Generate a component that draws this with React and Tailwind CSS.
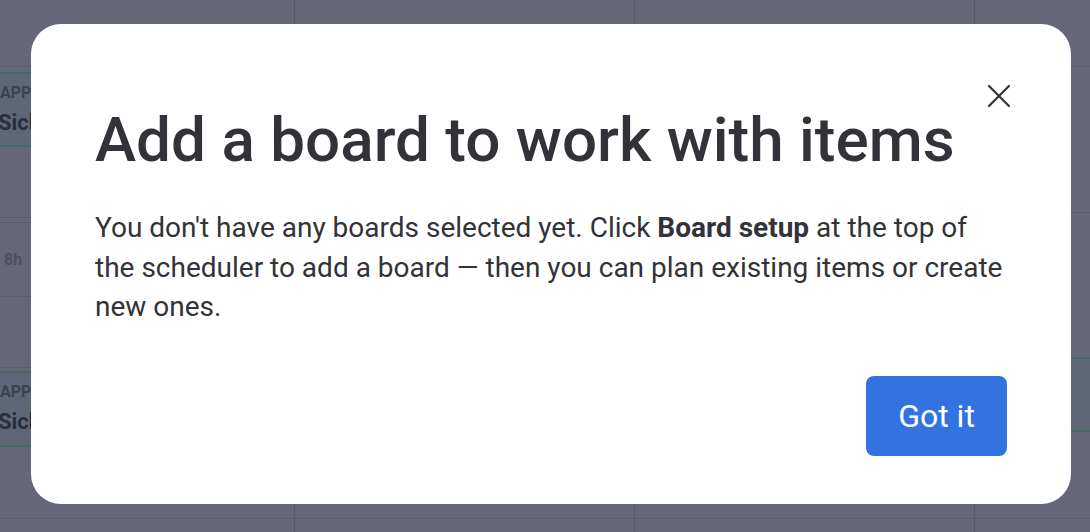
import React from "react";

const font = { fontFamily: "Roboto, 'Noto Sans', sans-serif" };

const Card = ({ className = "", label = true }) => (
  <div className={`border-y-2 border-[#3f6b62] bg-[#5d6778] flex flex-col justify-center ${className}`}>
    {label && (
      <>
        <div className="text-[16px] font-bold text-[#3d4252] leading-5">APPROVED</div>
        <div className="text-[22px] font-bold text-[#2b2d3c] -ml-[2px] leading-7 mt-[6px]">Sick leave</div>
      </>
    )}
  </div>
);

const Column = ({ width, children }) => (
  <div className={`flex flex-col border-r border-[#585a6c] shrink-0 ${width}`}>{children}</div>
);

const Background = () => (
  <div className="absolute inset-0 flex bg-[#656779] overflow-hidden">
    <Column width="w-[295px]">
      <div className="h-[67px] border-b border-[#5b5d6f]" />
      <div className="h-[151px] pt-[5px] border-b border-[#5b5d6f]">
        <Card className="h-[75px]" />
      </div>
      <div className="h-[5px] border-b border-[#5b5d6f]" />
      <div className="h-[74px] border-b border-[#5b5d6f] flex items-center">
        <span className="text-[16px] font-bold text-[#4c4e60] pl-[4px]">8h</span>
      </div>
      <div className="h-[71px] border-b border-[#5b5d6f]" />
      <div className="h-[151px] pt-[3px] border-b border-[#5b5d6f]">
        <Card className="h-[76px]" />
      </div>
    </Column>
    <Column width="w-[340px]">
      <div className="h-[67px] border-b border-[#5b5d6f]" />
      <div className="h-[452px] border-b border-[#5b5d6f]" />
    </Column>
    <Column width="w-[340px]">
      <div className="h-[67px] border-b border-[#5b5d6f]" />
      <div className="h-[452px] border-b border-[#5b5d6f]" />
    </Column>
    <div className="flex flex-col flex-1">
      <div className="h-[67px] border-b border-[#5b5d6f]" />
      <div className="h-[146px] border-b border-[#5b5d6f]" />
      <div className="h-[144px]" />
      <Card className="h-[75px]" label={false} />
      <div className="h-[87px] border-b border-[#5b5d6f]" />
    </div>
  </div>
);

export default function App() {
  return (
    <div className="relative w-[1090px] h-[532px] overflow-hidden" style={font}>
      <Background />
      <div className="absolute left-[31px] top-[24px] w-[1040px] h-[480px] bg-white rounded-[30px] px-[64px] pt-[80px] pb-[48px] flex flex-col">
        <button className="absolute right-[60px] top-[60px] w-[24px] h-[24px] flex items-center justify-center text-[#323338]">
          <svg width="24" height="24" viewBox="0 0 24 24" fill="none" stroke="currentColor" strokeWidth="2.2" strokeLinecap="round">
            <path d="M2 2L22 22M22 2L2 22" />
          </svg>
        </button>
        <h1 className="text-[62px] font-medium leading-[72px] text-[#323338] whitespace-nowrap">
          Add a board to work with items
        </h1>
        <p className="mt-[32px] text-[28px] leading-[39.5px] text-[#323338] -mr-[40px] whitespace-nowrap">
          You don't have any boards selected yet. Click <b className="font-bold">Board setup</b> at the top of
          <br />
          the scheduler to add a board — then you can plan existing items or create
          <br />
          new ones.
        </p>
        <div className="mt-auto flex justify-end">
          <button className="w-[141px] h-[80px] rounded-[8px] bg-[#3373e0] text-white text-[32px] leading-none">
            Got it
          </button>
        </div>
      </div>
    </div>
  );
}
